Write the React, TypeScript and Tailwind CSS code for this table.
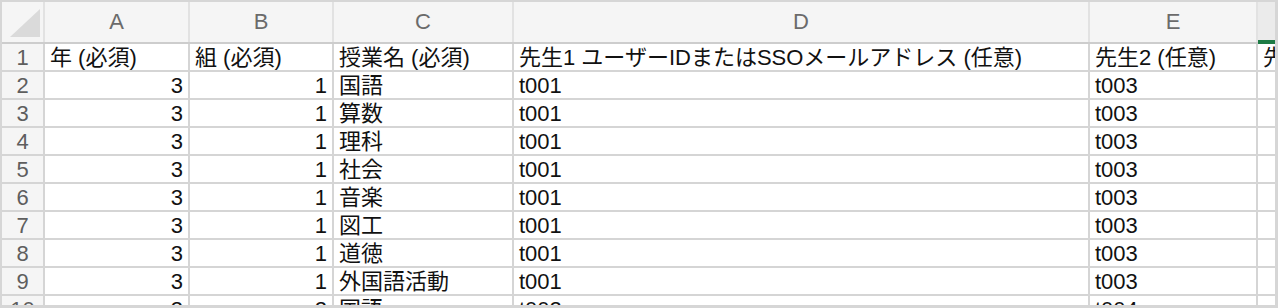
import React from 'react'

const FONT = { fontFamily: '"Liberation Sans", "Noto Sans CJK JP", sans-serif' }

const headers = ['A', 'B', 'C', 'D', 'E']
const widths = ['w-[145px]', 'w-[144px]', 'w-[180px]', 'w-[576px]', 'w-[168px]']

const subjects = ['国語', '算数', '理科', '社会', '音楽', '図工', '道徳', '外国語活動']

type Cell = string | number

const rows: Cell[][] = [
  ['年 (必須)', '組 (必須)', '授業名 (必須)', '先生1 ユーザーIDまたはSSOメールアドレス (任意)', '先生2 (任意)', '先生3 (任意)'],
  ...subjects.map((s) => [3, 1, s, 't001', 't003', ''] as Cell[]),
  [3, 2, '国語', 't002', 't004', ''],
]

const Corner = () => (
  <div className="w-[43px] h-full shrink-0 border-r-2 border-[#e2e2e2] bg-[#f5f5f5]">
    <svg width="41" height="40" viewBox="0 0 41 40">
      <polygon points="8,35 38,35 38,7" fill="#dadada" />
    </svg>
  </div>
)

export default function App() {
  return (
    <div className="w-[1278px] h-[308px] overflow-hidden bg-white border-t-2 border-l-2 border-r-[3px] border-b-[3px] border-[#d6d6d6]" style={FONT}>
      {/* column headers */}
      <div className="flex h-[42px] border-b-2 border-[#cdcdcd] bg-[#f5f5f5]">
        <Corner />
        {headers.map((h, i) => (
          <div
            key={h}
            className={`${widths[i]} shrink-0 border-r-2 border-[#e2e2e2] text-center text-[22px] leading-[40px] text-[#6b6b6b]`}
          >
            {h}
          </div>
        ))}
        <div className="flex-1 bg-[#ebebeb] flex flex-col justify-end">
          <div className="h-[2px] bg-[#1e7b45]" />
        </div>
      </div>
      <div className="h-0 relative">
        <div className="absolute left-[1256px] -top-[2px] w-[20px] h-[2px] bg-[#1e7b45]" />
      </div>

      {/* body rows */}
      {rows.map((row, r) => (
        <div key={r} className="flex h-[28px]">
          <div className="w-[43px] shrink-0 border-r-2 border-b-2 border-[#d5d5d5] bg-[#f5f5f5] text-center text-[22px] leading-[28px] text-[#5e5e5e] overflow-hidden">
            {r + 1}
          </div>
          {row.slice(0, 5).map((c, i) => (
            <div
              key={i}
              className={`${widths[i]} shrink-0 border-r-2 border-b-2 border-[#d5d5d5] px-[5px] text-[22px] leading-[28px] text-[#111] whitespace-nowrap overflow-hidden ${
                typeof c === 'number' ? 'text-right' : 'text-left'
              }`}
            >
              {c}
            </div>
          ))}
          <div className="flex-1 min-w-0 border-b-2 border-[#d5d5d5] pl-[5px] text-[22px] leading-[28px] text-[#111] whitespace-nowrap overflow-hidden">
            {row[5]}
          </div>
        </div>
      ))}
    </div>
  )
}
